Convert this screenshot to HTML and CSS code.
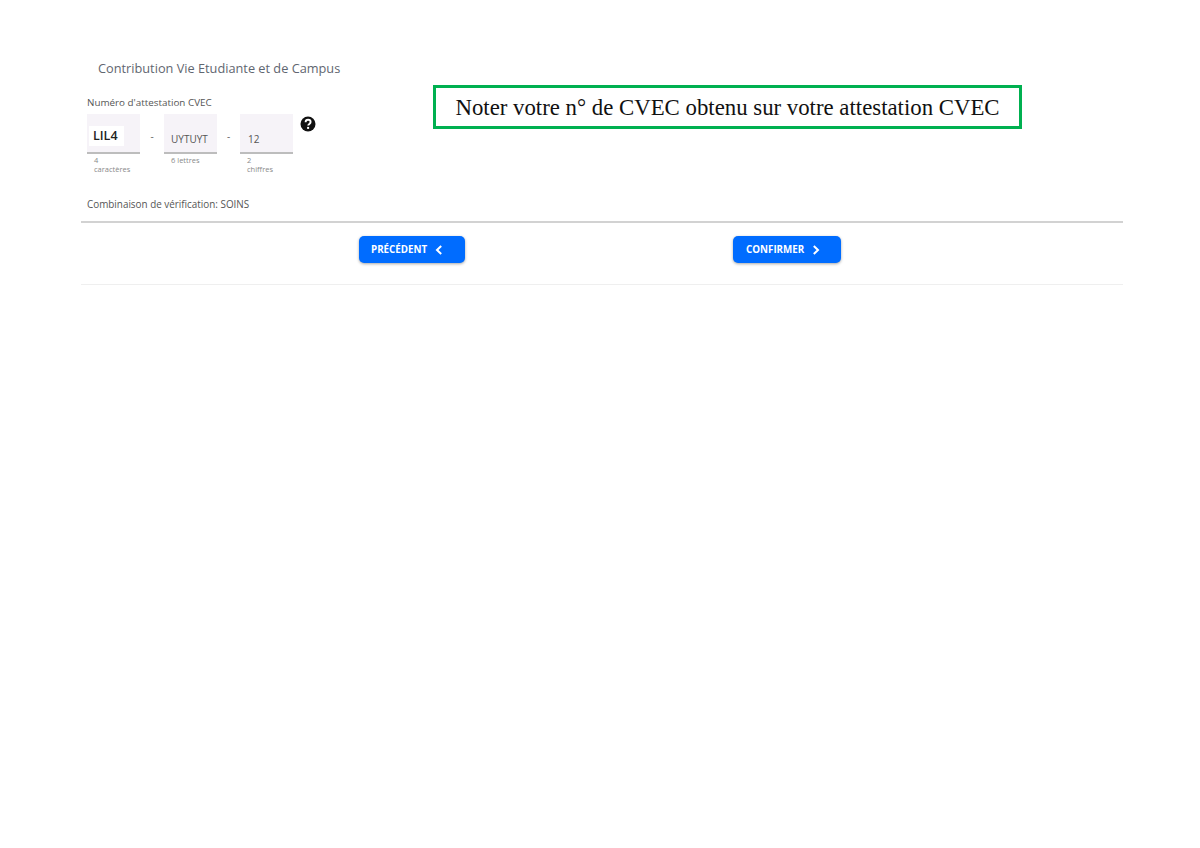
FILE: index.html
```html
<!DOCTYPE html>
<html lang="fr">
<head>
    <meta charset="UTF-8">
    <title>Contribution Vie Etudiante et de Campus</title>
    <link rel="stylesheet" href="styles.css">
</head>
<body>
    <div class="container">
        <div class="top">
            <div class="form">
                <h2 class="title">Contribution Vie Etudiante et de Campus</h2>
                <div class="label">Numéro d'attestation CVEC</div>
                <div class="fields">
                    <div class="field">
                        <div class="input"><span class="filled">LIL4</span></div>
                        <div class="hint">4<br>caractères</div>
                    </div>
                    <div class="dash">-</div>
                    <div class="field">
                        <div class="input"><span class="value">UYTUYT</span></div>
                        <div class="hint">6 lettres</div>
                    </div>
                    <div class="dash dash-last">-</div>
                    <div class="field">
                        <div class="input"><span class="value num">12</span></div>
                        <div class="hint">2<br>chiffres</div>
                    </div>
                    <div class="help">
                        <svg width="16" height="16" viewBox="0 0 16 16">
                            <circle cx="8" cy="8" r="7.5" fill="#111"/>
                            <path d="M5.6 6.2c0-1.5 1-2.4 2.5-2.4s2.5.9 2.5 2.2c0 1.9-2.4 1.9-2.4 3.6" fill="none" stroke="#fff" stroke-width="1.9"/>
                            <rect x="7.1" y="10.9" width="2" height="2" fill="#fff"/>
                        </svg>
                    </div>
                </div>
                <div class="check">Combinaison de vérification: SOINS</div>
            </div>
            <div class="callout">Noter votre n° de CVEC obtenu sur votre attestation CVEC</div>
        </div>
        <div class="actions">
            <div class="action-col">
                <a class="btn btn-prev">PRÉCÉDENT
                    <svg width="8" height="10" viewBox="0 0 8 10"><path d="M6.2 1 2 5l4.2 4" fill="none" stroke="#fff" stroke-width="2"/></svg>
                </a>
            </div>
            <div class="action-col">
                <a class="btn btn-next">CONFIRMER
                    <svg width="8" height="10" viewBox="0 0 8 10"><path d="M1.8 1 6 5 1.8 9" fill="none" stroke="#fff" stroke-width="2"/></svg>
                </a>
            </div>
        </div>
    </div>
</body>
</html>
```

FILE: styles.css
```css
body {
    margin: 0;
    background: white;
    font-family: "Open Sans", sans-serif;
    color: #555;
}

.container {
    width: 1042px;
    margin-left: 81px;
    padding-top: 60px;
}

.top {
    display: flex;
    height: 161px;
    border-bottom: 2px solid #d2d2d2;
}

.form {
    width: 352px;
    padding-left: 6px;
    box-sizing: border-box;
}

.title {
    margin: 0 0 18px 11px;
    font-size: 12.75px;
    line-height: 17px;
    font-weight: 400;
    color: #5f6670;
}

.label {
    font-size: 9.85px;
    line-height: 14px;
    color: #555;
}

.fields {
    display: flex;
    margin-top: 5px;
}

.field {
    width: 53px;
}

.input {
    height: 36px;
    padding-top: 2px;
    background: #f6f3f8;
    border-bottom: 2px solid #bdbdbd;
    box-sizing: content-box;
    display: flex;
    align-items: flex-end;
}

.filled {
    width: 31px;
    height: 20px;
    margin: 0 0 6px 2px;
    padding-left: 4px;
    background: white;
    font-size: 12.5px;
    line-height: 20px;
    font-weight: 600;
    color: #222;
}

.value {
    margin: 0 0 6px 7px;
    font-size: 10px;
    line-height: 14px;
    color: #555;
}

.num {
    margin-left: 8px;
}

.hint {
    margin: 2px 0 0 7px;
    font-size: 7.5px;
    line-height: 9px;
    color: #8a8a8a;
}

.dash {
    width: 24px;
    padding-top: 15px;
    text-align: center;
    font-size: 10px;
    color: #666;
}

.dash-last {
    width: 23px;
}

.help {
    margin: 1px 0 0 7px;
}

.check {
    margin-top: 23px;
    font-size: 9.9px;
    line-height: 14px;
    color: #555;
}

.callout {
    width: 589px;
    height: 44px;
    margin-top: 25px;
    box-sizing: border-box;
    border: 3px solid #00b050;
    font-family: "Liberation Serif", serif;
    font-size: 22.8px;
    line-height: 40px;
    text-align: center;
    color: #111;
}

.actions {
    display: flex;
    height: 61px;
    border-bottom: 1px solid #efefef;
}

.action-col {
    padding-top: 13px;
}

.action-col:first-child {
    margin-left: 278px;
    width: 374px;
}

.btn {
    display: flex;
    align-items: center;
    gap: 8px;
    height: 27px;
    padding-left: 12px;
    box-sizing: border-box;
    background: #006cff;
    border-radius: 5px;
    box-shadow: 0 1px 3px rgba(0,0,0,0.35);
    color: white;
    font-size: 9.8px;
    font-weight: 700;
}

.btn-prev {
    width: 106px;
}

.btn-next {
    width: 108px;
    padding-left: 13px;
}
```
